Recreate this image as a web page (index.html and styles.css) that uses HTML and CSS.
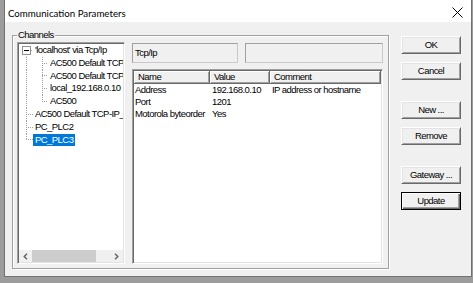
FILE: index.html
```html
<!DOCTYPE html>
<html>
<head>
<meta charset="utf-8">
<title>Communication Parameters</title>
<link rel="stylesheet" href="styles.css">
</head>
<body>
<div class="window">
  <div class="titlebar">
    <span class="title">Communication Parameters</span>
    <svg class="close" width="11" height="11" viewBox="0 0 11 11"><path d="M0.5 0.5 L10.5 10.5 M10.5 0.5 L0.5 10.5" stroke="#000" stroke-width="1" fill="none"/></svg>
  </div>
  <div class="client">
    <div class="groupbox">
      <span class="legend">Channels</span>
      <div class="tree">
        <div class="rows">
          <div class="row"><span class="g root"><span class="minus"></span></span><span class="label">'localhost' via Tcp/Ip</span></div>
          <div class="row"><span class="g pipe"></span><span class="g g15 tee"></span><span class="label">AC500 Default TCP-IP</span></div>
          <div class="row"><span class="g pipe"></span><span class="g g15 tee"></span><span class="label">AC500 Default TCP-IP</span></div>
          <div class="row"><span class="g pipe"></span><span class="g g15 tee"></span><span class="label">local_192.168.0.10</span></div>
          <div class="row"><span class="g pipe"></span><span class="g g15 elbow"></span><span class="label">AC500</span></div>
          <div class="row"><span class="g tee"></span><span class="label">AC500 Default TCP-IP_</span></div>
          <div class="row"><span class="g tee"></span><span class="label">PC_PLC2</span></div>
          <div class="row selected"><span class="g elbow"></span><span class="label">PC_PLC3</span></div>
        </div>
        <div class="hscroll">
          <span class="arrow"><svg width="5" height="7" viewBox="0 0 5 7"><polyline points="4,0.8 1.2,3.5 4,6.2" fill="none" stroke="#606060" stroke-width="1.4"/></svg></span>
          <span class="track"><span class="thumb"></span></span>
          <span class="arrow"><svg width="5" height="7" viewBox="0 0 5 7"><polyline points="1,0.8 3.8,3.5 1,6.2" fill="none" stroke="#606060" stroke-width="1.4"/></svg></span>
        </div>
      </div>
      <div class="panel">
        <div class="statics">
          <div class="static first">Tcp/Ip</div>
          <div class="static second"></div>
        </div>
        <div class="list">
          <div class="lhead"><span>Name</span><span>Value</span><span>Comment</span></div>
          <div class="lrow"><span>Address</span><span>192.168.0.10</span><span>IP address or hostname</span></div>
          <div class="lrow"><span>Port</span><span>1201</span><span></span></div>
          <div class="lrow"><span>Motorola byteorder</span><span>Yes</span><span></span></div>
        </div>
      </div>
    </div>
    <div class="buttons">
      <button class="btn">OK</button>
      <button class="btn">Cancel</button>
      <button class="btn sep">New ...</button>
      <button class="btn">Remove</button>
      <button class="btn sep">Gateway ...</button>
      <button class="btn default">Update</button>
    </div>
  </div>
</div>
</body>
</html>
```

FILE: styles.css
```css
* { box-sizing: border-box; }
:root {
  --dv: repeating-linear-gradient(to bottom, #a0a0a0 0 1px, transparent 1px 2px);
  --dh: repeating-linear-gradient(to right, #a0a0a0 0 1px, transparent 1px 2px);
}
html, body { margin: 0; padding: 0; }
body {
  width: 473px;
  height: 283px;
  background: #9c9c9c;
  overflow: hidden;
  font-family: "Liberation Sans", Arial, sans-serif;
  font-size: 9.5px;
  letter-spacing: -0.55px;
  color: #000;
}
.window {
  margin-left: 4px;
  width: 468px;
  height: 277px;
  background: #f0f0f0;
  border: 1px solid #717171;
  border-top: 0;
  display: flex;
  flex-direction: column;
}
.titlebar {
  height: 22px;
  flex: none;
  background: #fff;
  display: flex;
  align-items: center;
  justify-content: space-between;
  padding: 3px 8px 0 3px;
}
.title {
  font-family: Lato, "Liberation Sans", sans-serif;
  font-size: 9.7px;
  letter-spacing: 0;
}
.close { display: block; }
.client {
  flex: 1;
  display: flex;
  align-items: flex-start;
  padding-left: 7px;
}
.groupbox {
  position: relative;
  margin-top: 13px;
  width: 377px;
  height: 234px;
  flex: none;
  border: 1px solid #a0a0a0;
  box-shadow: 1px 1px 0 #fff, inset 1px 1px 0 #fff;
  display: flex;
  gap: 7px;
  padding: 6px 5px 4px 4px;
}
.legend {
  position: absolute;
  top: -7px;
  left: 4px;
  padding: 0 1px;
  line-height: 12px;
  background: #f0f0f0;
}
.tree {
  width: 108px;
  flex: none;
  background: #fff;
  border: 1px solid;
  border-color: #a0a0a0 #fff #fff #a0a0a0;
  padding: 1px;
  box-shadow: inset 1px 1px 0 #696969, inset -1px -1px 0 #e3e3e3;
  display: flex;
  flex-direction: column;
  overflow: hidden;
}
.rows { flex: 1; overflow: hidden; }
.row {
  display: flex;
  height: 12.8px;
  line-height: 12.8px;
  white-space: nowrap;
}
.g { flex: none; width: 14px; height: 100%; --x: 7px; }
.g15 { width: 15px; --x: 9px; }
.label { padding: 0 2px; }
.selected .label { background: #0078d7; color: #fff; }
.pipe { background: var(--dv) var(--x) 0 / 1px 100% no-repeat; }
.tee {
  background:
    var(--dh) right center / calc(100% - var(--x)) 1px no-repeat,
    var(--dv) var(--x) 0 / 1px 100% no-repeat;
}
.elbow {
  background:
    var(--dh) right center / calc(100% - var(--x)) 1px no-repeat,
    var(--dv) var(--x) 0 / 1px 50% no-repeat;
}
.root {
  display: flex;
  align-items: center;
  padding-left: 3px;
  background:
    var(--dh) right center / 2px 1px no-repeat,
    var(--dv) var(--x) 100% / 1px 50% no-repeat;
}
.minus {
  width: 9px;
  height: 9px;
  border: 1px solid #919191;
  background: #fff linear-gradient(#000, #000) center / 5px 1px no-repeat;
}
.hscroll {
  flex: none;
  height: 12px;
  background: #f0f0f0;
  display: flex;
}
.arrow {
  width: 13px;
  flex: none;
  display: flex;
  align-items: center;
  justify-content: center;
}
.arrow svg { display: block; }
.track { flex: 1; display: flex; }
.thumb { width: 64px; background: #cdcdcd; }
.panel {
  flex: 1;
  display: flex;
  flex-direction: column;
}
.statics {
  display: flex;
  gap: 7px;
  height: 20px;
  margin-top: 1px;
  flex: none;
}
.static {
  background: #f0f0f0;
  border: 1px solid;
  border-color: #a0a0a0 #c9c9c9 #c9c9c9 #a0a0a0;
  line-height: 18px;
  padding-left: 2px;
}
.static.first { width: 106px; }
.static.second { flex: 1; }
.list {
  flex: 1;
  margin-top: 6px;
  background: #fff;
  border: 1px solid;
  border-color: #a0a0a0 #fff #fff #a0a0a0;
  padding: 1px;
  box-shadow: inset 1px 1px 0 #696969, inset -1px -1px 0 #e3e3e3;
}
.lhead, .lrow {
  display: grid;
  grid-template-columns: 76px 60px 1fr;
  white-space: nowrap;
}
.lhead { height: 13px; }
.lhead span {
  background: #f0f0f0;
  border-right: 1px solid #696969;
  border-bottom: 1px solid #696969;
  box-shadow: inset 1px 1px 0 #fff, inset -1px -1px 0 #a0a0a0;
  padding-left: 4px;
  line-height: 12px;
}
.lrow { height: 12px; line-height: 12px; }
.lrow span { padding-left: 2px; overflow: hidden; }
.lrow span:first-child { padding-left: 1px; }
.buttons {
  margin-left: 12px;
  margin-top: 14px;
  width: 60px;
  flex: none;
  display: flex;
  flex-direction: column;
}
.btn {
  height: 18px;
  margin: 8px 0 0;
  padding: 0;
  font: inherit;
  letter-spacing: inherit;
  color: #000;
  background: #f0f0f0;
  border: 1px solid;
  border-color: #fff #696969 #696969 #fff;
  box-shadow: inset 1px 1px 0 #e3e3e3, inset -1px -1px 0 #a0a0a0;
  text-align: center;
  line-height: 16px;
}
.btn:first-child { margin-top: 0; }
.btn.sep { margin-top: 21px; }
.btn.default {
  border-color: #000;
  box-shadow: inset 1px 1px 0 #fff, inset -1px -1px 0 #696969, inset -2px -2px 0 #a0a0a0;
}
```
